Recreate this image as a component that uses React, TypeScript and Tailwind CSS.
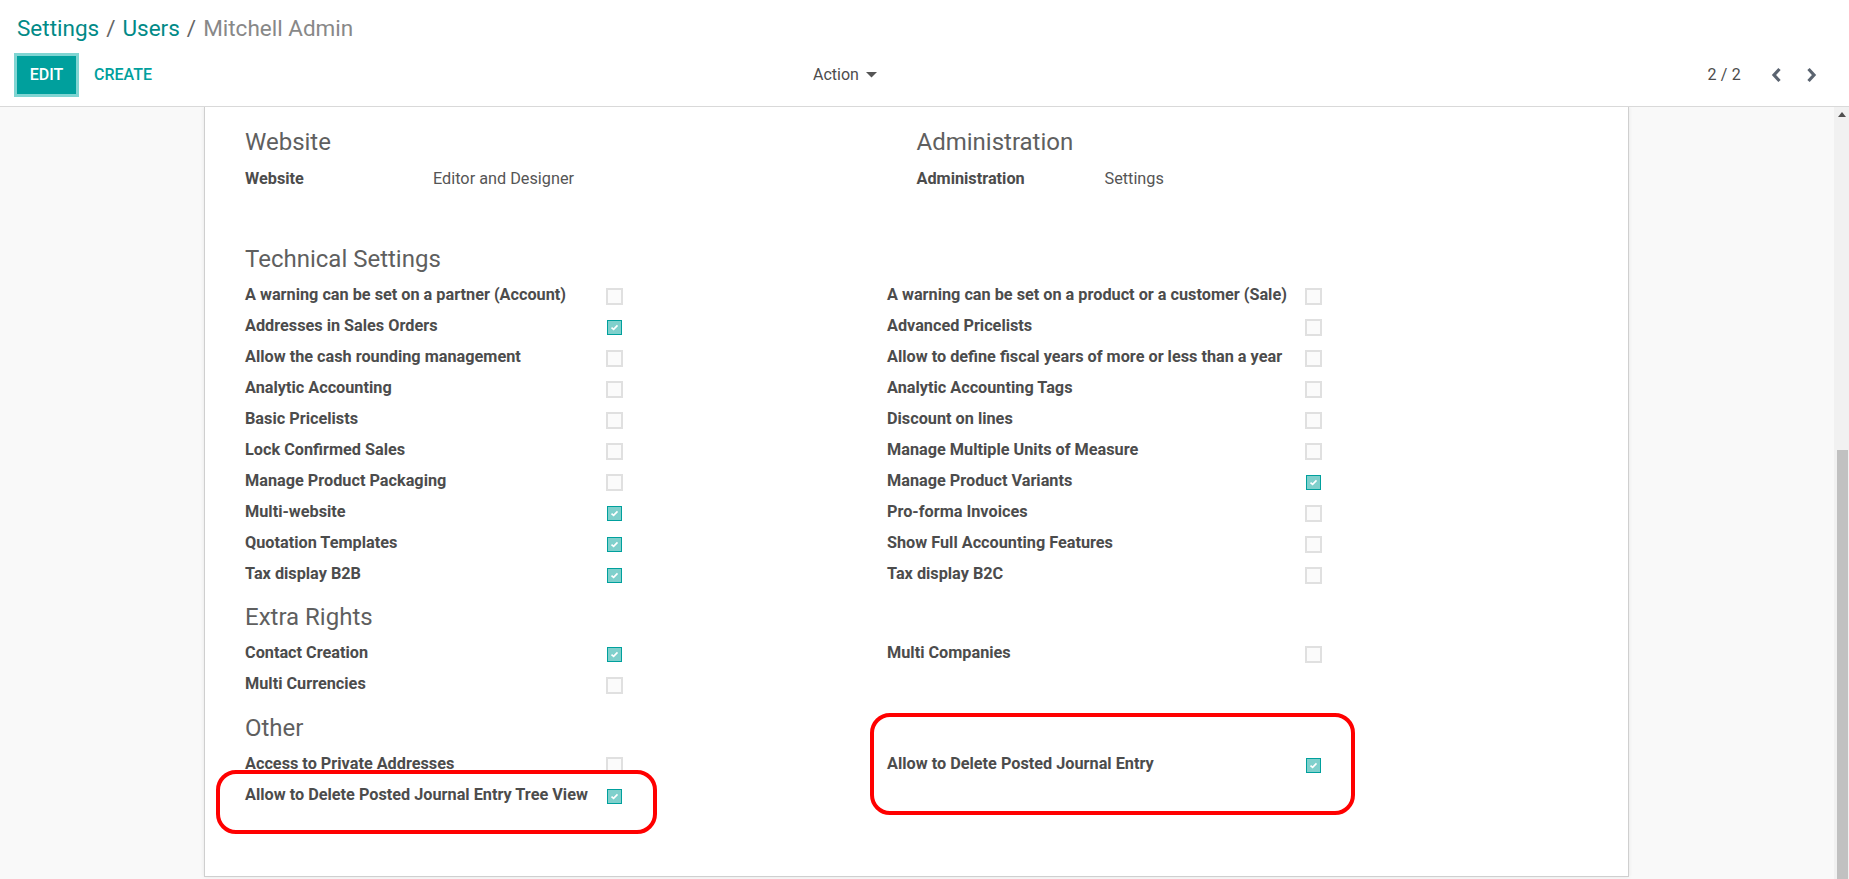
import React from "react";

const techLeft: [string, boolean][] = [
  ["A warning can be set on a partner (Account)", false],
  ["Addresses in Sales Orders", true],
  ["Allow the cash rounding management", false],
  ["Analytic Accounting", false],
  ["Basic Pricelists", false],
  ["Lock Confirmed Sales", false],
  ["Manage Product Packaging", false],
  ["Multi-website", true],
  ["Quotation Templates", true],
  ["Tax display B2B", true],
];

const techRight: [string, boolean][] = [
  ["A warning can be set on a product or a customer (Sale)", false],
  ["Advanced Pricelists", false],
  ["Allow to define fiscal years of more or less than a year", false],
  ["Analytic Accounting Tags", false],
  ["Discount on lines", false],
  ["Manage Multiple Units of Measure", false],
  ["Manage Product Variants", true],
  ["Pro-forma Invoices", false],
  ["Show Full Accounting Features", false],
  ["Tax display B2C", false],
];

function Checkbox({ checked }: { checked: boolean }) {
  return (
    <div className="w-[17px] h-[17px] mt-[1px] flex items-center justify-center shrink-0">
      {checked ? (
        <div className="w-[15px] h-[15px] border border-[#00a09d] bg-[#7fd0cc] flex items-center justify-center">
          <svg width="9" height="7" viewBox="0 0 9 7">
            <polyline points="1.5,3.6 3.6,5.4 7.5,1.4" fill="none" stroke="#ffffff" strokeWidth="1.6" />
          </svg>
        </div>
      ) : (
        <div className="w-[17px] h-[17px] border-2 border-[#e0e0e0] bg-[#fbfbfb]" />
      )}
    </div>
  );
}

function Row({ label, checked, w }: { label: string; checked: boolean; w: string }) {
  return (
    <div className="flex items-center h-[31px]">
      <div className={`${w} font-bold text-[16.25px] text-[#4c4c4c] whitespace-nowrap`}>{label}</div>
      <Checkbox checked={checked} />
    </div>
  );
}

function Heading({ children, className = "" }: { children: React.ReactNode; className?: string }) {
  return <div className={`h-[29px] leading-[29px] text-[24px] text-[#5f5f5f] ${className}`}>{children}</div>;
}

function Section({
  title,
  left,
  right,
  titleMt,
  rowsMt,
}: {
  title: string;
  left: [string, boolean][];
  right: [string, boolean][];
  titleMt: string;
  rowsMt: string;
}) {
  return (
    <div className={titleMt}>
      <Heading>{title}</Heading>
      <div className={`grid grid-cols-[642px_1fr] ${rowsMt}`}>
        <div className="flex flex-col">
          {left.map(([l, c]) => (
            <Row key={l} label={l} checked={c} w="w-[361px]" />
          ))}
        </div>
        <div className="flex flex-col">
          {right.map(([l, c]) => (
            <Row key={l} label={l} checked={c} w="w-[418px]" />
          ))}
        </div>
      </div>
    </div>
  );
}

export default function App() {
  return (
    <div
      className="w-[1849px] h-[879px] overflow-hidden flex flex-col bg-white"
      style={{ fontFamily: "Roboto, 'Noto Sans', 'Liberation Sans', sans-serif" }}
    >
      {/* Control panel */}
      <header className="h-[107px] shrink-0 border-b border-[#d9d9d9] bg-white flex flex-col">
        <div className="mt-[12px] h-[32px] leading-[32px] pl-[17px] text-[22.5px] whitespace-nowrap">
          <span className="text-[#018a87]">Settings</span>
          <span className="text-[#666] mx-[7px]">/</span>
          <span className="text-[#018a87]">Users</span>
          <span className="text-[#666] mx-[7px]">/</span>
          <span className="text-[#888]">Mitchell Admin</span>
        </div>
        <div className="mt-[9px] h-[44px] flex items-center">
          <div className="w-[813px] pl-[14px] flex items-center">
            <button className="w-[65px] h-[44px] border-[3px] border-[#80d5d2] bg-[#00a09d] text-white font-medium text-[16px] leading-none">
              EDIT
            </button>
            <button className="ml-[15px] text-[#00a09d] font-medium text-[16px] leading-none">CREATE</button>
          </div>
          <div className="flex items-center text-[16px] text-[#4c4c4c]">
            <span>Action</span>
            <svg className="ml-[7px]" width="11" height="6" viewBox="0 0 11 6">
              <polygon points="0,0 11,0 5.5,5.5" fill="#555" />
            </svg>
          </div>
          <div className="ml-auto pr-[32px] flex items-center">
            <span className="text-[16px] text-[#4c4c4c] tracking-[0.2px]">2 / 2</span>
            <svg className="ml-[30px]" width="11" height="16" viewBox="0 0 11 16">
              <polyline points="8.5,2 3,8 8.5,14" fill="none" stroke="#5b6470" strokeWidth="3.2" />
            </svg>
            <svg className="ml-[24px]" width="11" height="16" viewBox="0 0 11 16">
              <polyline points="2.5,2 8,8 2.5,14" fill="none" stroke="#5b6470" strokeWidth="3.2" />
            </svg>
          </div>
        </div>
      </header>

      {/* Content */}
      <div className="flex-1 flex min-h-0">
        <div className="flex-1 bg-[#f9f9f9] overflow-hidden">
          <div className="relative ml-[204px] w-[1425px] h-[770px] bg-white border-x border-b border-[#cfcfcf] shadow-[0_0_4px_rgba(0,0,0,0.08)] pl-[40px] pr-[40px] pt-[21px]">
            {/* Website / Administration */}
            <div className="grid grid-cols-2">
              <div>
                <Heading>Website</Heading>
                <div className="mt-[7px] h-[31px] flex items-center text-[16.25px]">
                  <div className="w-[188px] font-bold text-[#4c4c4c]">Website</div>
                  <div className="text-[#555]">Editor and Designer</div>
                </div>
              </div>
              <div>
                <Heading>Administration</Heading>
                <div className="mt-[7px] h-[31px] flex items-center text-[16.25px]">
                  <div className="w-[188px] font-bold text-[#4c4c4c]">Administration</div>
                  <div className="text-[#555]">Settings</div>
                </div>
              </div>
            </div>

            <Section title="Technical Settings" left={techLeft} right={techRight} titleMt="mt-[50px]" rowsMt="mt-[6px]" />
            <Section
              title="Extra Rights"
              left={[
                ["Contact Creation", true],
                ["Multi Currencies", false],
              ]}
              right={[["Multi Companies", false]]}
              titleMt="mt-[13px]"
              rowsMt="mt-[6px]"
            />
            <Section
              title="Other"
              left={[
                ["Access to Private Addresses", false],
                ["Allow to Delete Posted Journal Entry Tree View", true],
              ]}
              right={[["Allow to Delete Posted Journal Entry", true]]}
              titleMt="mt-[14px]"
              rowsMt="mt-[6px]"
            />

            {/* Red annotation outlines */}
            <div className="absolute left-[11px] top-[663px] w-[441px] h-[64px] border-[4px] border-[#ff0000] rounded-[20px] pointer-events-none" />
            <div className="absolute left-[665px] top-[606px] w-[485px] h-[102px] border-[4px] border-[#ff0000] rounded-[20px] pointer-events-none" />
          </div>
        </div>

        {/* Scrollbar */}
        <div className="w-[15px] bg-[#f1f1f1] flex flex-col">
          <div className="h-[15px] flex items-center justify-center">
            <svg width="8" height="5" viewBox="0 0 8 5">
              <polygon points="0,5 8,5 4,0" fill="#505050" />
            </svg>
          </div>
          <div className="h-[328px]" />
          <div className="flex-1 ml-[3px] mr-[1px] bg-[#c1c1c1]" />
        </div>
      </div>
    </div>
  );
}
